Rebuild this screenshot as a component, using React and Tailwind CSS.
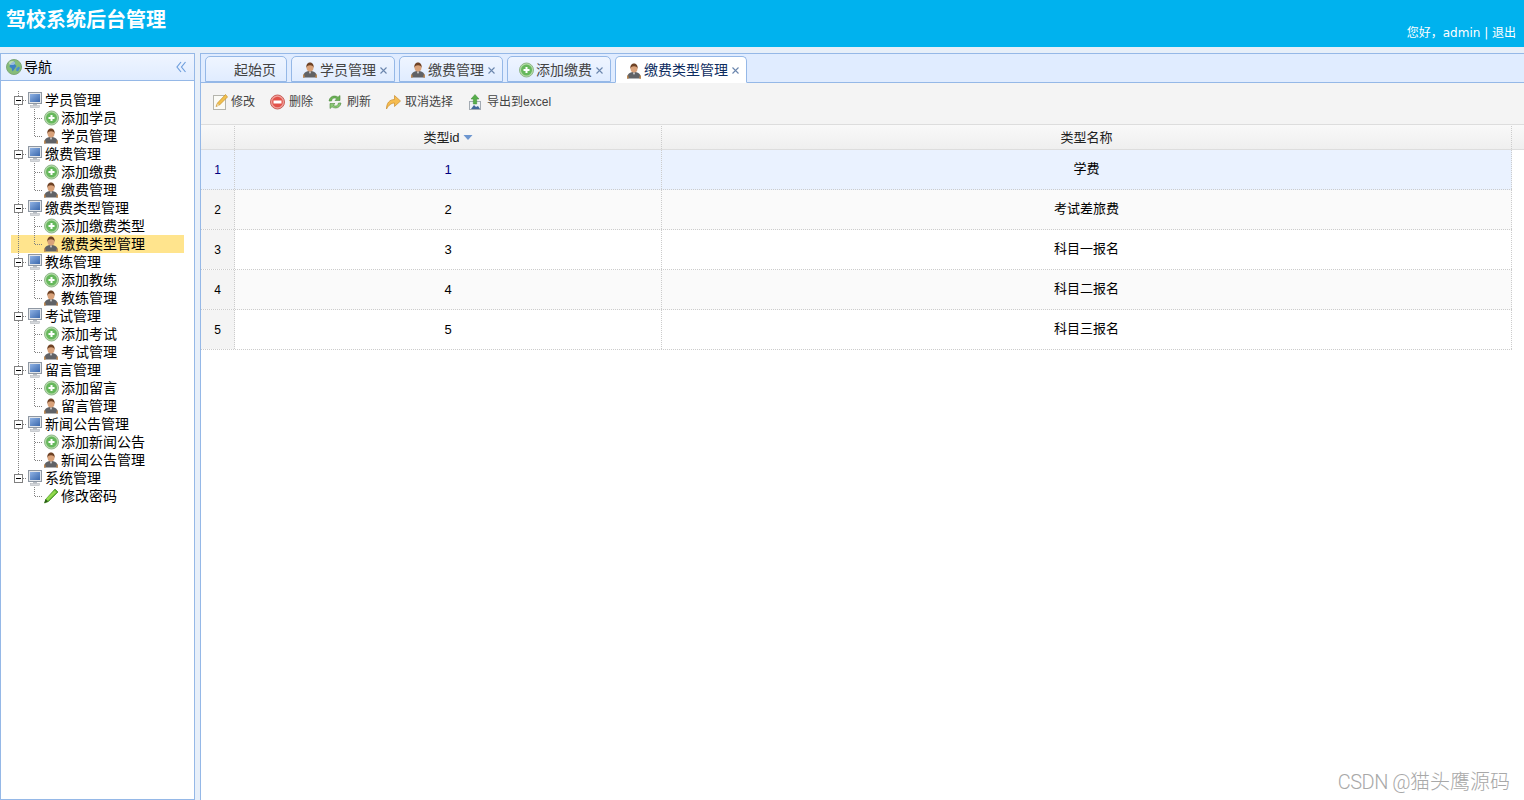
import React from "react"

const FONT = "font-['Microsoft_YaHei','Liberation_Sans','Noto_Sans_CJK_SC',sans-serif]"

// Small drawn icons, all on a 16x16 box
function GlobeIcon() {
  return (
    <svg width="16" height="16" viewBox="0 0 16 16" className="shrink-0">
      <circle cx="8" cy="8" r="7.500" fill="#86bd78" stroke="#7fa87a" />
      <path d="M4 6c1-2 3-3.500 5-3.500l-.5 2.500 2 2-2 3-2 2.500-1-3.500-2-1z" fill="#3f82c4" />
      <path d="M10.500 9l2.500-1.500 1 1.500-2 3.500-2-1z" fill="#4b8fcb" />
      <ellipse cx="6" cy="4" rx="3" ry="2" fill="#ffffff" opacity="0.45" />
    </svg>
  )
}

function ComputerIcon() {
  return (
    <svg width="16" height="16" viewBox="0 0 16 16" className="shrink-0">
      <defs>
        <linearGradient id="screen" x1="0" y1="0" x2="1" y2="1">
          <stop offset="0" stopColor="#8fb2e4" />
          <stop offset="1" stopColor="#3a68ad" />
        </linearGradient>
      </defs>
      <rect x="1.500" y="0.500" width="13" height="11" fill="#e3e6ea" stroke="#8f98a3" />
      <rect x="3" y="2" width="10" height="8" fill="url(#screen)" />
      <rect x="6" y="12" width="4" height="1.500" fill="#b8bdc4" />
      <rect x="3.500" y="13.500" width="9" height="2" fill="#d5d8dc" stroke="#a8adb3" strokeWidth="0.500" />
    </svg>
  )
}

function AddIcon() {
  return (
    <svg width="16" height="16" viewBox="0 0 16 16" className="shrink-0">
      <circle cx="8.500" cy="8" r="7" fill="#b6dcaa" stroke="#8fb78a" />
      <circle cx="8.500" cy="8" r="5.500" fill="#66b85c" />
      <path d="M7.500 5h2v2h2v2h-2v2h-2v-2h-2v-2h2z" fill="#ffffff" />
    </svg>
  )
}

function UserIcon() {
  return (
    <svg width="16" height="16" viewBox="0 0 16 16" className="shrink-0">
      <path d="M1 15.500c0-4 2.200-6.500 7-6.500s7 2.500 7 6.500z" fill="#606266" />
      <path d="M1 15.500c0-1.800.3-3 1-3.800l.8 3.800zM15 15.500c0-1.800-.3-3-1-3.800l-.8 3.800z" fill="#c98a4a" />
      <path d="M6.800 9.500h2.400l-1.200 2.500z" fill="#dddddd" />
      <ellipse cx="8" cy="5.500" rx="3.500" ry="4" fill="#d9a27a" />
      <path d="M4.300 6C4 2.200 6 .5 8 .5s4 1.700 3.700 5.500c-.4-1.700-1.400-2.700-3.700-2.700S4.700 4.300 4.300 6z" fill="#6e4225" />
    </svg>
  )
}

function PencilIcon() {
  return (
    <svg width="16" height="16" viewBox="0 0 16 16" className="shrink-0">
      <path d="M12 1l3 3-9.500 9.500-4 1.500 1.500-4z" fill="#5cb030" stroke="#3c8a20" strokeWidth="0.700" />
      <path d="M11.500 2.500l1.800 1.800-8.500 8.500-1.800-1.800z" fill="#93d94f" />
      <path d="M2.500 11l2.500 2.500-3.500 1.500z" fill="#2c5a18" />
    </svg>
  )
}

function EditIcon() {
  return (
    <svg width="16" height="16" viewBox="0 0 16 16" className="shrink-0">
      <rect x="1.500" y="1.500" width="12" height="14" fill="#fbfbf6" stroke="#b5b5ad" />
      <path d="M13.500 0.500l2 2.500-8 8-3.500 1.500 1.500-3.500z" fill="#f1c04e" stroke="#c58f2c" strokeWidth="0.700" />
      <path d="M5.500 9.500l2 2-3 1z" fill="#e9d7b0" />
    </svg>
  )
}

function RemoveIcon() {
  return (
    <svg width="16" height="16" viewBox="0 0 16 16" className="shrink-0">
      <circle cx="7.500" cy="8" r="7" fill="#f0a09a" stroke="#c9605a" />
      <circle cx="7.500" cy="8" r="5.300" fill="#e2524a" />
      <rect x="3.500" y="6.500" width="8" height="3" fill="#ffffff" />
    </svg>
  )
}

function ReloadIcon() {
  return (
    <svg width="16" height="16" viewBox="0 0 16 16" className="shrink-0">
      <path d="M1 7c.5-3.500 3-5 5.500-5 1.500 0 2.500.5 3.500 1.200L12 1.500v5H7l1.800-1.800C8 4.200 7.300 4 6.500 4 5 4 3.800 5 3.500 7z" fill="#6cb356" stroke="#4d8a3e" strokeWidth="0.600" />
      <path d="M13 9c-.5 3.500-3 5-5.500 5-1.500 0-2.500-.5-3.500-1.200L2 14.500v-5h5l-1.800 1.800c.8.5 1.500.7 2.300.7 1.500 0 2.700-1 3-3z" fill="#8cc976" stroke="#4d8a3e" strokeWidth="0.600" />
    </svg>
  )
}

function UndoIcon() {
  return (
    <svg width="16" height="16" viewBox="0 0 16 16" className="shrink-0">
      <path d="M0.500 15c0-6 3-9.500 8-9.500V1.500l6 5.500-6 5.500V9C5.500 9 2.500 11 .5 15z" fill="#f6bc4f" stroke="#c98d2e" strokeWidth="0.700" />
    </svg>
  )
}

function ExportIcon() {
  return (
    <svg width="16" height="16" viewBox="0 0 16 16" className="shrink-0">
      <rect x="1.500" y="7.500" width="11" height="8" fill="#eef2f6" stroke="#a3abb3" />
      <path d="M3 15l3-4 2 2 2-1 2 3z" fill="#42679a" />
      <path d="M7 0.500l4 4.500H8.700v5H5.300V5H3z" fill="#57ae4b" stroke="#3f8a36" strokeWidth="0.500" />
    </svg>
  )
}

function CloseIcon() {
  return (
    <svg width="7" height="7" viewBox="0 0 7 7" className="ml-[4px] shrink-0">
      <path d="M0.500 0.500l6 6M6.500 0.500l-6 6" stroke="#6b86ad" strokeWidth="1.100" />
    </svg>
  )
}

// Tree connectors: dotted guides drawn per row
function RootJoint({ last }) {
  return (
    <svg width="16" height="18" className="shrink-0" shapeRendering="crispEdges">
      <path d="M7.500 0V5" stroke="#808080" strokeDasharray="1 1" />
      {!last && <path d="M7.500 14V18" stroke="#808080" strokeDasharray="1 1" />}
      <path d="M12 9.500H16" stroke="#808080" strokeDasharray="1 1" />
      <rect x="3.500" y="5.500" width="8" height="8" fill="#ffffff" stroke="#808080" />
      <path d="M5 9.500H10" stroke="#000000" />
    </svg>
  )
}

function ChildJoint({ rootLast, childLast }) {
  return (
    <svg width="32" height="18" className="shrink-0" shapeRendering="crispEdges">
      {!rootLast && <path d="M7.500 0V18" stroke="#808080" strokeDasharray="1 1" />}
      <path d={childLast ? "M23.500 0V9" : "M23.500 0V18"} stroke="#808080" strokeDasharray="1 1" />
      <path d="M24 9.500H32" stroke="#808080" strokeDasharray="1 1" />
    </svg>
  )
}

const TREE = [
  { name: "学员管理", items: [["add", "添加学员"], ["user", "学员管理"]] },
  { name: "缴费管理", items: [["add", "添加缴费"], ["user", "缴费管理"]] },
  { name: "缴费类型管理", items: [["add", "添加缴费类型"], ["user", "缴费类型管理", true]] },
  { name: "教练管理", items: [["add", "添加教练"], ["user", "教练管理"]] },
  { name: "考试管理", items: [["add", "添加考试"], ["user", "考试管理"]] },
  { name: "留言管理", items: [["add", "添加留言"], ["user", "留言管理"]] },
  { name: "新闻公告管理", items: [["add", "添加新闻公告"], ["user", "新闻公告管理"]] },
  { name: "系统管理", items: [["pencil", "修改密码"]] },
]

const ROWS = [
  [1, "学费"],
  [2, "考试差旅费"],
  [3, "科目一报名"],
  [4, "科目二报名"],
  [5, "科目三报名"],
]

function Sidebar() {
  return (
    <div className="w-[195px] shrink-0 flex flex-col border border-[#95b8e7] bg-white">
      <div className="h-[27px] shrink-0 flex items-center pl-[5px] pr-[8px] border-b border-[#95b8e7] bg-gradient-to-b from-[#eff5ff] to-[#e0ecff]">
        <GlobeIcon />
        <span className="ml-[2px] text-[14px] text-black">导航</span>
        <svg width="10" height="12" viewBox="0 0 10 12" className="ml-auto">
          <path d="M5 1L1 6l4 5M9.500 1L5.500 6l4 5" fill="none" stroke="#6f9fdd" strokeWidth="1.200" />
        </svg>
      </div>
      <div className="pt-[10px] pl-[10px] pr-[10px]">
        {TREE.map((group, gi) => {
          const rootLast = gi === TREE.length - 1
          return (
            <div key={group.name}>
              <div className="h-[18px] flex items-center">
                <RootJoint last={rootLast} />
                <ComputerIcon />
                <span className="ml-[2px] text-[14px] leading-[18px] text-black whitespace-nowrap">{group.name}</span>
              </div>
              {group.items.map(([icon, label, selected], ci) => (
                <div key={label} className={`h-[18px] flex items-center ${selected ? "bg-[#ffe48d]" : ""}`}>
                  <ChildJoint rootLast={rootLast} childLast={ci === group.items.length - 1} />
                  {icon === "add" && <AddIcon />}
                  {icon === "user" && <UserIcon />}
                  {icon === "pencil" && <PencilIcon />}
                  <span className="ml-[2px] text-[14px] leading-[18px] text-black whitespace-nowrap">{label}</span>
                </div>
              ))}
            </div>
          )
        })}
      </div>
    </div>
  )
}

function Tab({ width, icon, label, closable, active }) {
  return (
    <div
      className={`${width} shrink-0 flex items-center pt-[2px] border border-[#95b8e7] rounded-t-[5px] ${
        active ? "h-[27px] bg-white border-b-white -mb-px" : "h-[26px] bg-gradient-to-b from-[#eff5ff] to-[#e0ecff]"
      }`}
    >
      <span className="ml-[10px] w-[16px] flex shrink-0">{icon}</span>
      <span className={`ml-[2px] text-[14px] whitespace-nowrap ${active ? "text-[#0e2d5f]" : "text-[#444]"}`}>{label}</span>
      {closable && <CloseIcon />}
    </div>
  )
}

function ToolButton({ icon, label }) {
  return (
    <div className="flex items-center gap-[3px]">
      {icon}
      <span className="text-[12px] text-[#444] whitespace-nowrap">{label}</span>
    </div>
  )
}

function Grid() {
  return (
    <div>
      <div className="h-[26px] flex pt-px border-y border-[#dddddd] bg-gradient-to-b from-[#f9f9f9] to-[#efefef] text-[13px] text-[#222]">
        <div className="w-[34px] shrink-0 border-r border-dotted border-[#cccccc]" />
        <div className="w-[427px] shrink-0 flex items-center justify-center border-r border-dotted border-[#cccccc]">
          类型id
          <svg width="10" height="5" viewBox="0 0 10 5" className="ml-[3px]">
            <path d="M0.500 0h9L5 5z" fill="#6d96cf" />
          </svg>
        </div>
        <div className="w-[850px] shrink-0 flex items-center justify-center border-r border-dotted border-[#cccccc]">类型名称</div>
      </div>
      {ROWS.map(([id, name], i) => (
        <div
          key={id}
          className={`w-[1311px] h-[40px] flex text-[13px] border-b border-dotted border-[#cccccc] ${
            i === 0 ? "bg-[#eaf2ff] text-[#000080]" : i % 2 === 1 ? "bg-[#fafafa] text-black" : "bg-white text-black"
          }`}
        >
          <div className={`w-[34px] shrink-0 flex items-center justify-center text-[12px] border-r border-dotted border-[#cccccc] ${i === 0 ? "" : "bg-[#f4f4f4]"}`}>
            {id}
          </div>
          <div className="w-[427px] shrink-0 flex items-center justify-center border-r border-dotted border-[#cccccc]">{id}</div>
          <div className={`w-[850px] shrink-0 flex items-center justify-center pb-px border-r border-dotted border-[#cccccc] ${i === 0 ? "text-black" : ""}`}>{name}</div>
        </div>
      ))}
    </div>
  )
}

export default function App() {
  return (
    <div className={`relative h-screen flex flex-col overflow-hidden bg-[#e7eff9] ${FONT}`}>
      <div className="h-[47px] shrink-0 flex bg-[#00b2ee] text-white">
        <div className="pl-[6px] pt-[6px] text-[20px] leading-[28px] font-bold">驾校系统后台管理</div>
        <div className="ml-auto pr-[8px] pt-[24px] text-[12px] leading-[18px] font-['DejaVu_Sans','Noto_Sans_CJK_SC',sans-serif]">您好，admin | 退出</div>
      </div>

      <div className="flex-1 min-h-0 flex pt-[6px]">
        <Sidebar />
        <div className="ml-[5px] flex-1 min-w-0 flex flex-col border-l border-t border-[#95b8e7] bg-white">
          {/* tabs */}
          <div className="h-[29px] shrink-0 flex items-end gap-[4px] pl-[4px] bg-[#e0ecff] border-b border-[#95b8e7]">
            <Tab width="w-[82px]" label="起始页" />
            <Tab width="w-[104px]" icon={<UserIcon />} label="学员管理" closable />
            <Tab width="w-[104px]" icon={<UserIcon />} label="缴费管理" closable />
            <Tab width="w-[104px]" icon={<AddIcon />} label="添加缴费" closable />
            <Tab width="w-[132px]" icon={<UserIcon />} label="缴费类型管理" closable active />
          </div>
          {/* toolbar */}
          <div className="h-[41px] shrink-0 flex items-center gap-[15px] pl-[11px] pb-[4px] bg-[#f4f4f4]">
            <ToolButton icon={<EditIcon />} label="修改" />
            <ToolButton icon={<RemoveIcon />} label="删除" />
            <ToolButton icon={<ReloadIcon />} label="刷新" />
            <ToolButton icon={<UndoIcon />} label="取消选择" />
            <ToolButton icon={<ExportIcon />} label="导出到excel" />
          </div>
          <Grid />
        </div>
      </div>

      <div className="absolute right-[14px] bottom-[4px] text-[20px] leading-[28px] text-[#a8a8a8] font-['Roboto','Noto_Sans_CJK_SC',sans-serif] font-light">
        <span className="tracking-[-0.5px]">CSDN @</span>猫头鹰源码
      </div>
    </div>
  )
}
